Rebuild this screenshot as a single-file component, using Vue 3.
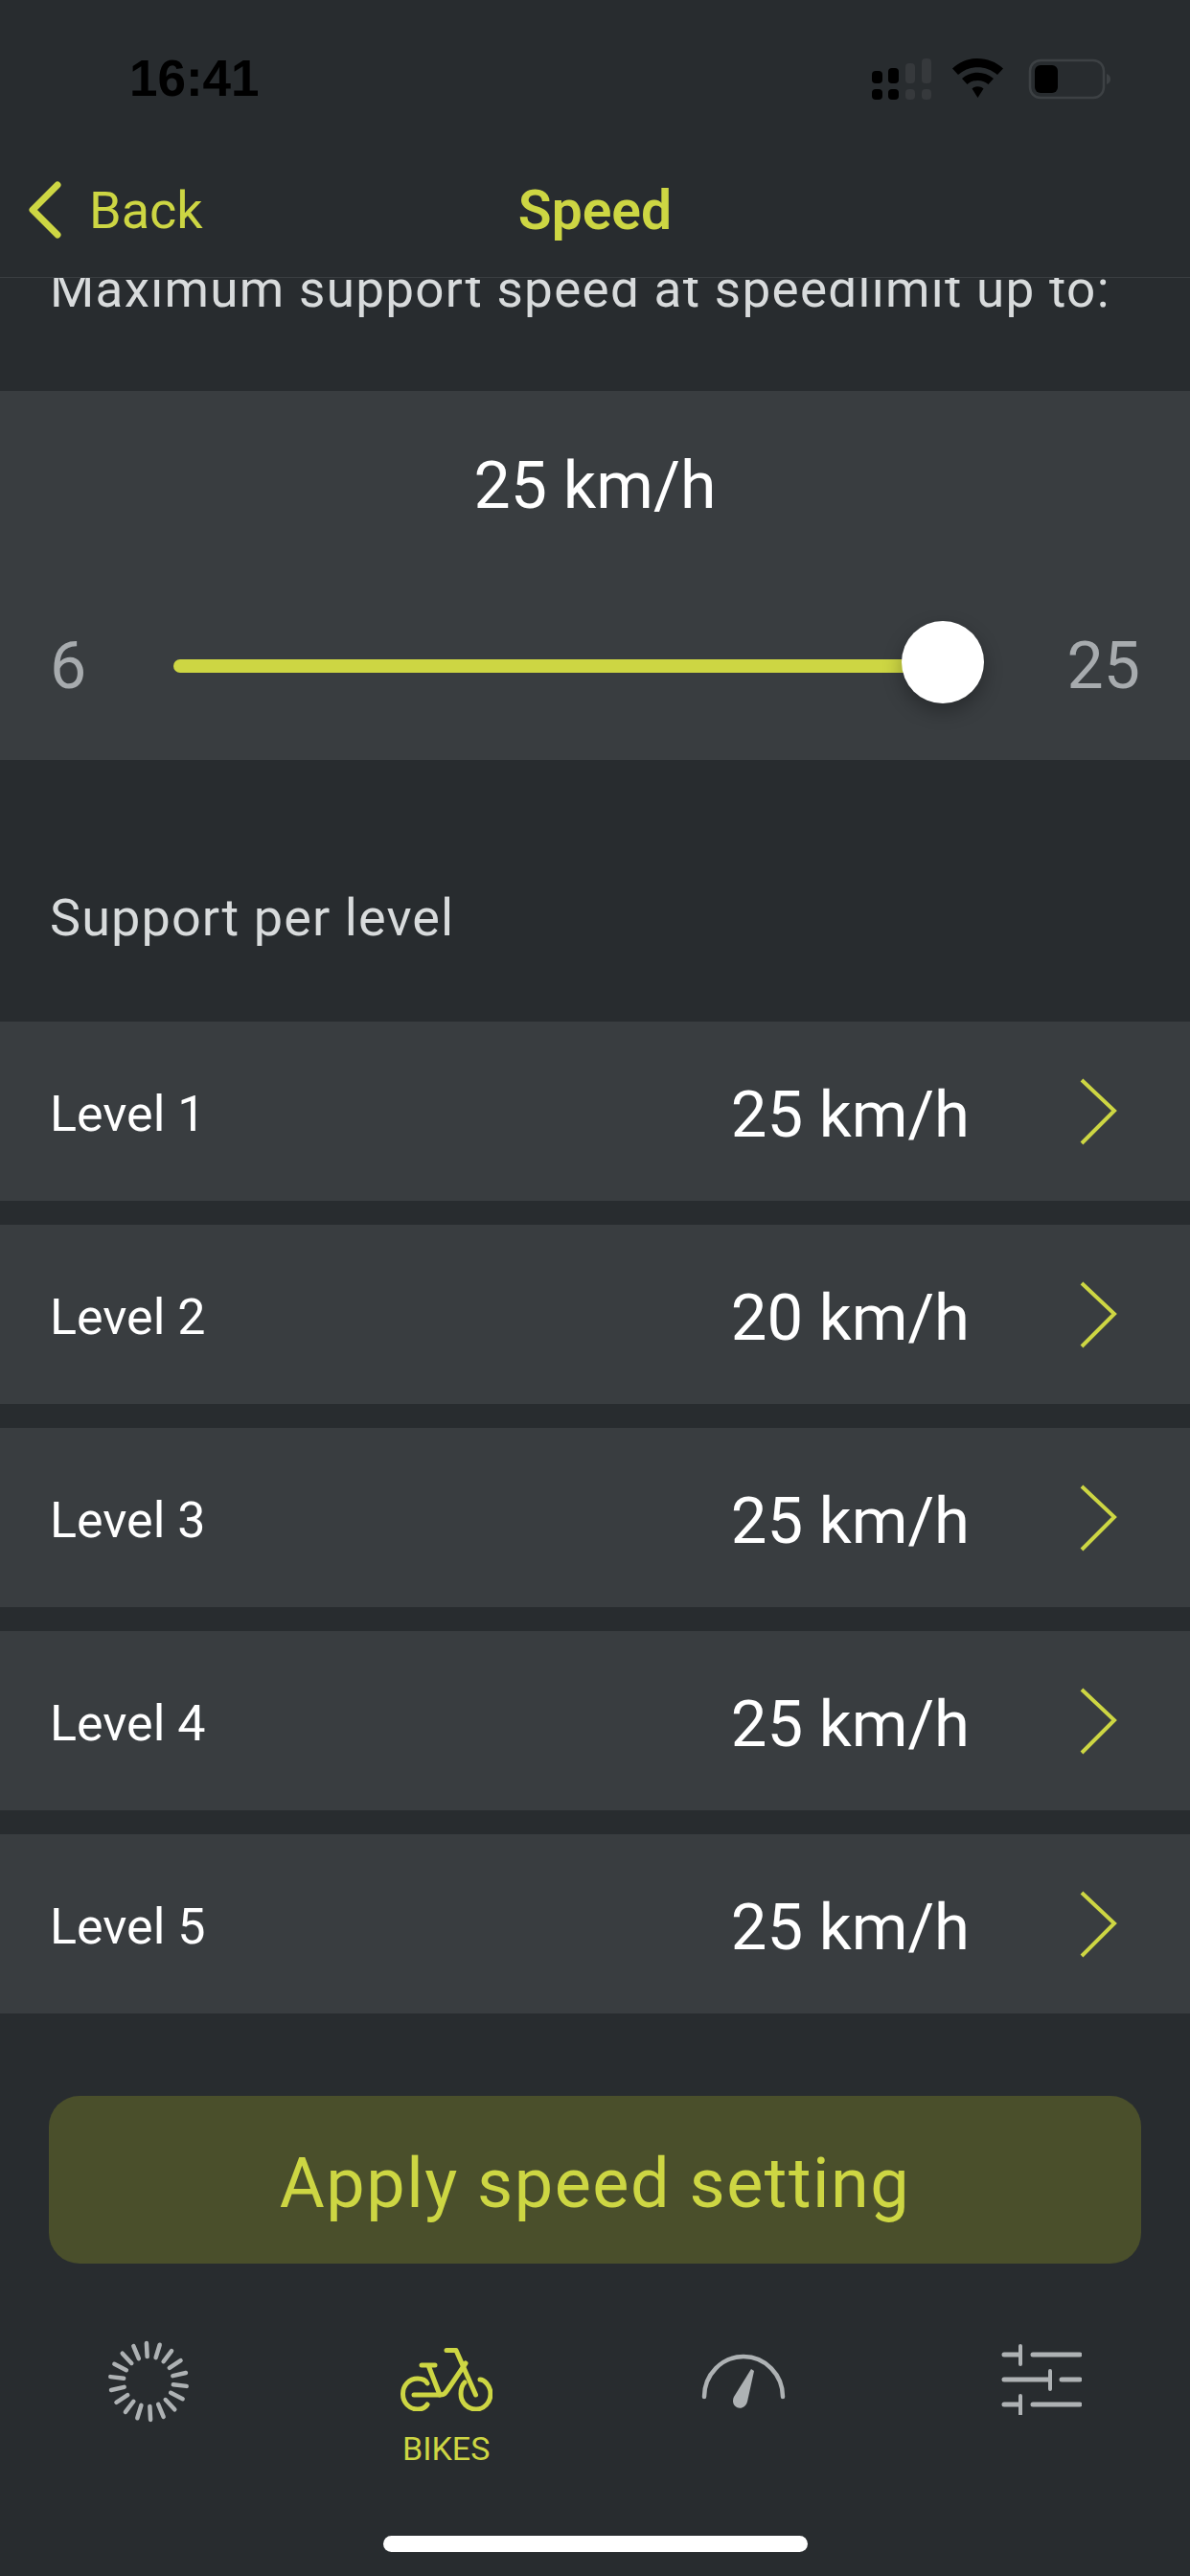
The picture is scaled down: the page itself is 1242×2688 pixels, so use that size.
<template>
  <div class="screen">
    <header class="top">
      <div class="status">
        <span class="time">16:41</span>
        <svg class="status-icons" width="256" height="56" viewBox="0 0 256 56">
          <!-- signal -->
          <g fill="#000">
            <rect x="2" y="19" width="11" height="13" rx="4" />
            <rect x="2" y="38" width="11" height="11" rx="4" />
            <rect x="19" y="16" width="11" height="16" rx="4" />
            <rect x="19" y="38" width="11" height="11" rx="4" />
          </g>
          <g fill="#36393c">
            <rect x="37" y="11" width="10" height="21" rx="4" />
            <rect x="37" y="38" width="10" height="11" rx="4" />
            <rect x="54" y="6" width="10" height="26" rx="4" />
            <rect x="54" y="38" width="10" height="11" rx="4" />
          </g>
          <!-- wifi -->
          <path d="M86 16.500C101 2.500 124 2.500 139 16.500L133 23C121 12.500 104 12.500 92 23Z" fill="#000" />
          <path d="M96 27C106 18.500 119 18.500 129 27L123.500 33C117 27.500 108 27.500 101.500 33Z" fill="#000" />
          <path d="M106.500 37.500C110 34.500 115 34.500 118.500 37.500L112.500 47Z" fill="#000" />
          <!-- battery -->
          <rect x="167" y="8" width="77" height="39" rx="11" fill="none" stroke="#3d4144" stroke-width="2.500" />
          <rect x="172" y="13" width="24" height="29" rx="6" fill="#000" />
          <path d="M247 22C250 23 251 25 251 27.500C251 30 250 32 247 33Z" fill="#3d4144" />
        </svg>
      </div>
      <nav class="titlebar">
        <div class="back">
          <svg width="40" height="64" viewBox="0 0 40 64">
            <path d="M33 6L7 32L33 58" fill="none" stroke="#cdd643" stroke-width="7" stroke-linecap="round" stroke-linejoin="round" />
          </svg>
          <span>Back</span>
        </div>
        <h1>Speed</h1>
        <span></span>
      </nav>
    </header>

    <main class="content">
      <p class="intro">Maximum support speed at speedlimit up to:</p>

      <section class="panel">
        <div class="panel-value">25 km/h</div>
        <div class="slider-row">
          <span class="limit">6</span>
          <div class="track">
            <div class="thumb"></div>
          </div>
          <span class="limit">25</span>
        </div>
      </section>

      <p class="section-title">Support per level</p>

      <ul class="levels">
        <li v-for="item in levels" :key="item.name" class="level">
          <span class="level-name">{{ item.name }}</span>
          <span class="level-value">{{ item.speed }} km/h</span>
          <svg class="level-arrow" width="40" height="70" viewBox="0 0 40 70">
            <path d="M3 2L37 34L3 68" fill="none" stroke="#cdd643" stroke-width="4" />
          </svg>
        </li>
      </ul>

      <button class="apply">Apply speed setting</button>
    </main>

    <footer class="tabs">
      <div class="tab">
        <svg width="90" height="90" viewBox="-45 -45 90 90">
          <line
            v-for="a in ticks"
            :key="a"
            x1="0"
            y1="-26"
            x2="0"
            y2="-40"
            :transform="`rotate(${a})`"
            stroke="#aeb2b4"
            stroke-width="4.500"
            stroke-linecap="round"
          />
        </svg>
      </div>
      <div class="tab active">
        <svg class="icon-bike" width="96" height="66" viewBox="0 0 96 66" fill="none" stroke="#cdd643" stroke-width="5" stroke-linecap="round" stroke-linejoin="round">
          <path d="M48 2.500H58L78.500 49" />
          <path d="M28 37C26 33 22 32 18 32C9 32 2.500 39 2.500 48C2.500 57 9 64 18 64C22 64 26 62 28 59" />
          <path d="M14 49H42C46 49 47 47 49 44L68 16" />
          <path d="M22 18H36M29 18L41 49" />
          <path d="M67 36C64 39 63 43 63 48C63 57 70 64 79 64C87 64 94 57 94 48C94 39 87 33 83 33" />
        </svg>
        <span class="tab-label">BIKES</span>
      </div>
      <div class="tab">
        <svg class="icon-gauge" width="88" height="58" viewBox="0 0 88 58">
          <path d="M3 45A41 42 0 0 1 85 45" fill="none" stroke="#aeb2b4" stroke-width="4.500" stroke-linecap="round" />
          <path d="M52 16L55 18L48 50C46.500 56 41 58 37 56C33 54 32 49 34 45Z" fill="#aeb2b4" />
        </svg>
      </div>
      <div class="tab">
        <svg class="icon-sliders" width="84" height="74" viewBox="0 0 84 74" fill="none" stroke="#aeb2b4" stroke-linecap="round">
          <g stroke-width="5">
            <path d="M3 11H19M33 11H82" />
            <path d="M3 37H50M63 37H82" />
            <path d="M3 63H19M33 63H82" />
          </g>
          <g stroke-width="4">
            <path d="M20 2V21M51 28V47M20 54V73" />
          </g>
        </svg>
      </div>
    </footer>

    <div class="home-indicator"></div>
  </div>
</template>

<script setup>
const levels = [
  { name: 'Level 1', speed: 25 },
  { name: 'Level 2', speed: 20 },
  { name: 'Level 3', speed: 25 },
  { name: 'Level 4', speed: 25 },
  { name: 'Level 5', speed: 25 }
]

// spinner icon, 18 spokes
const ticks = Array.from({ length: 18 }, (_, i) => i * 20 - 3)
</script>

<style>
body {
  background: #282c2f;
}
</style>

<style scoped>
.screen {
  width: 1242px;
  height: 2688px;
  overflow: hidden;
  display: flex;
  flex-direction: column;
  background: #282c2f;
  font-family: Roboto, "Liberation Sans", sans-serif;
  color: #fff;
  position: relative;
}

.top {
  height: 290px;
  flex-shrink: 0;
  border-bottom: 1px solid #3a3e41;
  box-sizing: border-box;
  position: relative;
  z-index: 1;
  background: #282c2f;
}

.status {
  height: 184px;
  display: flex;
  align-items: flex-start;
  justify-content: space-between;
  padding: 55px 78px 0 135px;
  box-sizing: border-box;
}

.time {
  font-family: "Liberation Sans", sans-serif;
  font-weight: 700;
  font-size: 53px;
  line-height: 54px;
  color: #000;
}

.titlebar {
  display: grid;
  grid-template-columns: 1fr auto 1fr;
  align-items: center;
  height: 70px;
  color: #cdd643;
  font-size: 54px;
}

.back {
  display: flex;
  align-items: center;
  gap: 26px;
  padding-left: 27px;
}

h1 {
  margin: 0;
  font-size: 57px;
  font-weight: 600;
}

.content {
  flex: 1;
  overflow: hidden;
}

.intro {
  margin: -18px 0 0;
  padding: 0 52px;
  font-size: 53px;
  line-height: 60px;
  color: #d8dbdc;
  letter-spacing: 1.300px;
  white-space: nowrap;
}

.panel {
  height: 385px;
  margin-top: 76px;
  background: #393d40;
  padding-top: 54px;
  box-sizing: border-box;
}

.panel-value {
  text-align: center;
  font-size: 68px;
  line-height: 90px;
}

.slider-row {
  display: flex;
  align-items: center;
  margin-top: 103px;
  padding: 0 52px;
  font-size: 68px;
}

.limit {
  color: #a7abae;
  flex: 0 0 auto;
}

.track {
  flex: 1;
  height: 14px;
  margin: 0 130px 0 91px;
  background: #cdd643;
  border-radius: 7px;
  position: relative;
}

.thumb {
  position: absolute;
  right: -43px;
  top: -40px;
  width: 86px;
  height: 86px;
  border-radius: 50%;
  background: #fff;
  box-shadow: 0 8px 20px rgba(0, 0, 0, 0.3);
}

.section-title {
  margin: 130px 0 0;
  padding: 0 52px;
  font-size: 54px;
  line-height: 70px;
  color: #d8dbdc;
  letter-spacing: 1.100px;
}

.levels {
  list-style: none;
  margin: 73px 0 0;
  padding: 0;
  display: flex;
  flex-direction: column;
  gap: 25px;
}

.level {
  height: 187px;
  display: flex;
  align-items: center;
  background: #393d40;
  padding: 0 76px 0 52px;
}

.level-name {
  font-size: 52px;
  flex: 1;
  padding-top: 6px;
}

.level-value {
  font-size: 67px;
  margin-right: 114px;
  padding-top: 6px;
}

.apply {
  display: block;
  width: 1140px;
  height: 175px;
  margin: 86px 51px 0;
  padding: 8px 0 0;
  border: 0;
  border-radius: 32px;
  background: #4a4f2b;
  color: #cdd643;
  font-family: inherit;
  font-size: 72px;
  letter-spacing: 1.500px;
}

.tabs {
  position: absolute;
  top: 2440px;
  left: 0;
  width: 1242px;
  display: grid;
  grid-template-columns: repeat(4, 1fr);
}

.tab {
  display: flex;
  flex-direction: column;
  align-items: center;
}

.icon-bike {
  margin-top: 10px;
}

.icon-gauge {
  margin-top: 16px;
}

.icon-sliders {
  margin-top: 6px;
}

.tab-label {
  margin-top: 21px;
  font-size: 34px;
  line-height: 36px;
  color: #cdd643;
}

.home-indicator {
  position: absolute;
  left: 400px;
  top: 2646px;
  width: 443px;
  height: 17px;
  border-radius: 9px;
  background: #fff;
}
</style>
